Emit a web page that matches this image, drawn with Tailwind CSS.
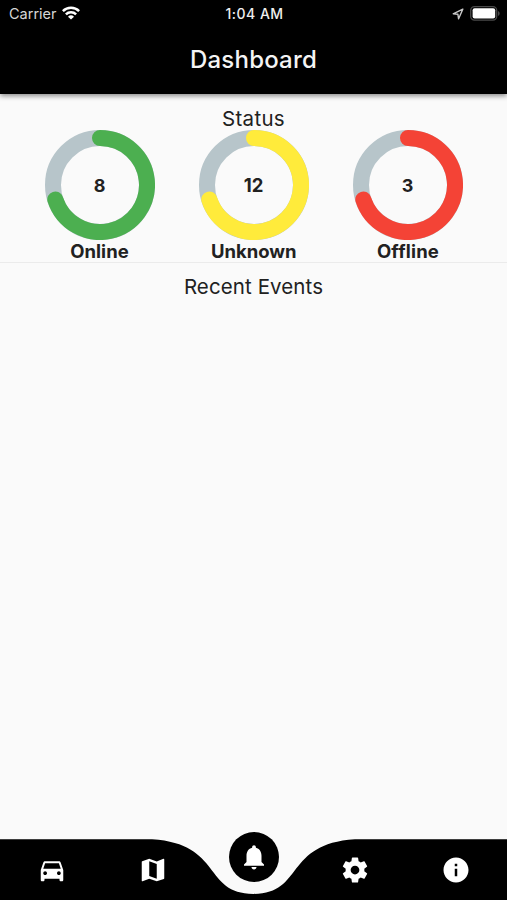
<!DOCTYPE html>
<html lang="en">

<head>
  <meta charset="UTF-8" />
  <meta name="viewport" content="width=device-width, initial-scale=1.0" />
  <script src="https://cdn.jsdelivr.net/npm/@tailwindcss/browser@4"></script>
  <title>Dashboard</title>
</head>

<body class="h-screen overflow-hidden flex flex-col bg-[#fafafa] font-['Inter',sans-serif] text-[#212121]">

  <header class="h-[93.5px] shrink-0 bg-black text-white shadow-[0_2px_5px_rgba(0,0,0,0.45)]">
    <!-- Status bar -->
    <div class="h-[27px] grid grid-cols-3 items-center pl-[9px] pr-[7px]">
      <div class="flex items-center gap-[5px] text-[14.5px] leading-none text-[#d6d6d6] pt-px">
        <span>Carrier</span>
        <svg viewBox="0 0 18 14" class="w-[18px] h-[14px] -mt-[2px]" fill="none" stroke="white" stroke-width="2.5">
          <path d="M0.9 5.2a11.4 11.4 0 0 1 16.2 0" />
          <path d="M3.9 8.4a7.2 7.2 0 0 1 10.2 0" />
          <path d="M9 13.6L6 10.7a4.3 4.3 0 0 1 6 0z" fill="white" stroke="none" />
        </svg>
      </div>
      <div class="text-center text-[14px] leading-none font-medium tracking-[0.5px] text-[#eeeeee] pt-px">1:04 AM</div>
      <div class="flex items-center justify-end gap-[6px]">
        <svg viewBox="0 0 12 12" class="w-3 h-3" fill="none" stroke="#c8c8c8" stroke-width="1.4" stroke-linejoin="round">
          <path d="M10.8 1.2L1.2 5.8l4.7 0.5 0.7 4.5z" />
        </svg>
        <svg viewBox="0 0 30 15" class="w-[30px] h-[15px]">
          <rect x="0.7" y="0.7" width="26" height="13.4" rx="3.8" fill="none" stroke="#4a4a4a" stroke-width="1.3" />
          <rect x="2.6" y="2.3" width="22.6" height="10.2" rx="2" fill="white" />
          <path d="M28 5v5c1-.4 1.7-1.400 1.700-2.500S29 5.400 28 5z" fill="#4a4a4a" />
        </svg>
      </div>
    </div>
    <h1 class="h-[66px] flex items-center justify-center text-[24px] font-medium tracking-[0.2px] text-[#f4f4f4]">Dashboard</h1>
  </header>

  <main class="flex-1">
    <section class="h-[169px] pt-[13.5px] border-b border-[#ebebeb]">
      <h2 class="text-center text-[20.5px] leading-[23px] tracking-[0.3px]">Status</h2>
      <div class="flex justify-between pl-[44.5px] pr-[44px]">
        <div class="w-[110px] flex flex-col items-center">
          <svg viewBox="0 0 110 110" class="w-[110px] h-[110px]" fill="none" stroke-width="16">
            <circle cx="55" cy="55" r="47" stroke="#b7c5ca" />
            <path d="M55 8A47 47 0 1 1 10.3 69.500" stroke="#4caf50" stroke-linecap="round" />
            <text x="54.500" y="61.500" text-anchor="middle" fill="#212121" stroke="none" class="text-[18px] font-bold">8</text>
          </svg>
          <span class="text-[18.5px] leading-[22px] font-bold">Online</span>
        </div>
        <div class="w-[110px] flex flex-col items-center">
          <svg viewBox="0 0 110 110" class="w-[110px] h-[110px]" fill="none" stroke-width="16">
            <circle cx="55" cy="55" r="47" stroke="#b7c5ca" />
            <path d="M55 8A47 47 0 1 1 10.3 69.500" stroke="#ffeb3b" stroke-linecap="round" />
            <text x="54.500" y="61.500" text-anchor="middle" fill="#212121" stroke="none" class="text-[18.5px] font-bold">12</text>
          </svg>
          <span class="text-[18.5px] leading-[22px] font-bold">Unknown</span>
        </div>
        <div class="w-[110px] flex flex-col items-center">
          <svg viewBox="0 0 110 110" class="w-[110px] h-[110px]" fill="none" stroke-width="16">
            <circle cx="55" cy="55" r="47" stroke="#b7c5ca" />
            <path d="M55 8A47 47 0 1 1 10.3 69.500" stroke="#f44336" stroke-linecap="round" />
            <text x="54.500" y="61.500" text-anchor="middle" fill="#212121" stroke="none" class="text-[18px] font-bold">3</text>
          </svg>
          <span class="text-[18.5px] leading-[22px] font-bold tracking-[0.2px]">Offline</span>
        </div>
      </div>
    </section>
    <h2 class="mt-[12.5px] text-center text-[20.5px] leading-6 tracking-[0.1px]">Recent Events</h2>
  </main>

  <!-- Curved bottom navigation -->
  <nav class="relative h-[61px] shrink-0">
    <svg viewBox="0 0 507 61" class="absolute inset-0 w-full h-full">
      <path d="M0 0.300H152.100C223.100 4.800 202.800 54.900 253.500 54.900S283.900 4.800 354.900 0.300H507V61H0z" />
    </svg>
    <div class="relative grid grid-cols-5 h-full justify-items-center items-center pl-px text-white">
      <a href="#" aria-label="Vehicles"><svg viewBox="0 0 24 24" class="w-[30px] h-[30px]" fill="currentColor">
          <path d="M18.920 6.010C18.720 5.420 18.160 5 17.500 5h-11c-.66 0-1.210.42-1.420 1.010L3 12v8c0 .55.45 1 1 1h1c.55 0 1-.45 1-1v-1h12v1c0 .55.45 1 1 1h1c.55 0 1-.45 1-1v-8l-2.080-5.990zM6.500 16c-.83 0-1.500-.67-1.500-1.500S5.670 13 6.500 13s1.500.67 1.500 1.500S7.330 16 6.500 16zm11 0c-.83 0-1.500-.67-1.500-1.500s.67-1.500 1.500-1.500 1.500.67 1.500 1.500-.67 1.500-1.500 1.500zM5 11l1.500-4.500h11L19 11H5z" />
        </svg></a>
      <a href="#" aria-label="Map"><svg viewBox="0 0 24 24" class="w-[30px] h-[30px]" fill="currentColor">
          <path d="M20.500 3l-.16.030L15 5.100 9 3 3.360 4.900c-.21.070-.36.250-.36.480V20.500c0 .28.220.5.500.5l.16-.030L9 18.900l6 2.100 5.640-1.900c.21-.070.36-.250.36-.480V3.500c0-.28-.22-.5-.5-.5zM15 19l-6-2.110V5l6 2.110V19z" />
        </svg></a>
      <a href="#" aria-label="Notifications" class="w-[50px] h-[50px] rounded-full bg-black flex items-center justify-center -mt-[26px]"><svg viewBox="0 0 24 24" class="w-[30px] h-[30px]" fill="currentColor">
          <path d="M12 22c1.100 0 2-.9 2-2h-4c0 1.100.89 2 2 2zm6-6v-5c0-3.070-1.640-5.640-4.500-6.320V4c0-.83-.67-1.500-1.500-1.500s-1.500.67-1.500 1.500v.68C7.630 5.360 6 7.920 6 11v5l-2 2v1h16v-1l-2-2z" />
        </svg></a>
      <a href="#" aria-label="Settings"><svg viewBox="0 0 24 24" class="w-[30px] h-[30px]" fill="currentColor">
          <path d="M19.430 12.980c.04-.32.070-.64.070-.98s-.03-.66-.07-.98l2.110-1.650c.19-.15.240-.42.120-.64l-2-3.460c-.12-.22-.39-.3-.61-.22l-2.490 1c-.52-.4-1.080-.73-1.690-.98l-.38-2.650C14.460 2.180 14.250 2 14 2h-4c-.25 0-.46.18-.49.42l-.38 2.650c-.61.25-1.170.59-1.690.98l-2.490-1c-.23-.09-.49 0-.61.22l-2 3.460c-.13.22-.07.49.12.64l2.110 1.650c-.04.32-.07.65-.07.98s.03.66.07.98l-2.110 1.650c-.19.15-.24.42-.12.64l2 3.460c.12.22.39.3.61.22l2.490-1c.52.4 1.080.73 1.690.98l.38 2.650c.03.24.24.42.49.42h4c.25 0 .46-.18.49-.42l.38-2.650c.61-.25 1.170-.59 1.690-.98l2.490 1c.23.09.49 0 .61-.22l2-3.460c.12-.22.07-.49-.12-.64l-2.110-1.650zM12 15.500c-1.930 0-3.500-1.570-3.500-3.500s1.570-3.500 3.500-3.500 3.500 1.570 3.500 3.500-1.570 3.500-3.500 3.500z" />
        </svg></a>
      <a href="#" aria-label="Info"><svg viewBox="0 0 24 24" class="w-[30px] h-[30px]" fill="currentColor">
          <path d="M12 2C6.480 2 2 6.480 2 12s4.480 10 10 10 10-4.480 10-10S17.520 2 12 2zm1 15h-2v-6h2v6zm0-8h-2V7h2v2z" />
        </svg></a>
    </div>
  </nav>

</body>

</html>
